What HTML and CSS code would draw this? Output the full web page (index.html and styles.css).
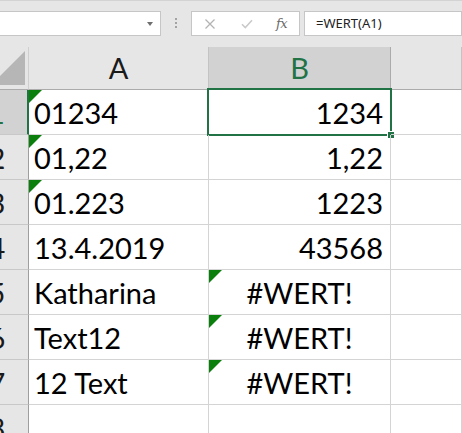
FILE: index.html
```html
<!DOCTYPE html>
<html lang="de">
<head>
<meta charset="utf-8">
<title>WERT</title>
<link rel="stylesheet" href="styles.css">
</head>
<body>
<div class="toolbar">
  <div class="namebox"><span class="arrow"></span></div>
  <div class="sep"><i></i><i></i><i></i></div>
  <div class="fbtns">
    <svg class="ic-x" width="12" height="10" viewBox="0 0 12 10"><path d="M1.5 0.5 L10.5 9.5 M10.5 0.5 L1.5 9.5" stroke="#b3b3b3" stroke-width="1.3" fill="none"/></svg>
    <svg class="ic-ok" width="12" height="10" viewBox="0 0 12 10"><path d="M1 5.2 L4.3 8.6 L11 1.2" stroke="#c9c9c9" stroke-width="1.5" fill="none"/></svg>
    <span class="fx">fx</span>
  </div>
  <div class="fbox">=WERT(A1)</div>
</div>
<div class="sheet">
  <div class="corner"><span class="tri"></span></div>
  <div class="ch">A</div>
  <div class="ch ch-sel">B</div>
  <div class="ch"></div>

  <div class="rh rh-sel">1</div>
  <div class="c txt flag">01234</div>
  <div class="c num selcell">1234<span class="sel"><span class="handle"></span></span></div>
  <div class="c"></div>

  <div class="rh">2</div>
  <div class="c txt flag">01,22</div>
  <div class="c num">1,22</div>
  <div class="c"></div>

  <div class="rh">3</div>
  <div class="c txt flag">01.223</div>
  <div class="c num">1223</div>
  <div class="c"></div>

  <div class="rh">4</div>
  <div class="c txt">13.4.2019</div>
  <div class="c num">43568</div>
  <div class="c"></div>

  <div class="rh">5</div>
  <div class="c txt">Katharina</div>
  <div class="c err flag">#WERT!</div>
  <div class="c"></div>

  <div class="rh">6</div>
  <div class="c txt">Text12</div>
  <div class="c err flag">#WERT!</div>
  <div class="c"></div>

  <div class="rh">7</div>
  <div class="c txt">12 Text</div>
  <div class="c err flag">#WERT!</div>
  <div class="c"></div>

  <div class="rh">8</div>
  <div class="c txt"></div>
  <div class="c"></div>
  <div class="c"></div>
</div>
</body>
</html>
```
FILE: styles.css
```css
* { box-sizing: border-box; }
html, body { margin: 0; padding: 0; }
body {
  width: 462px;
  height: 433px;
  overflow: hidden;
  background: #fff;
  font-family: Lato, "Open Sans", sans-serif;
}

/* formula toolbar */
.toolbar {
  height: 47px;
  background: #e6e6e6;
  border-top: 1px solid #d3d3d3;
  padding-top: 10px;
  display: flex;
  align-items: flex-start;
}
.namebox {
  width: 164px;
  margin-left: -3px;
  height: 25px;
  background: #fff;
  border: 1px solid #c6c6c6;
  display: flex;
  justify-content: flex-end;
  align-items: center;
  padding-right: 7px;
}
.arrow {
  width: 0;
  height: 0;
  border-left: 3.5px solid transparent;
  border-right: 3.5px solid transparent;
  border-top: 4px solid #6e6e6e;
}
.sep {
  width: 30px;
  height: 25px;
  display: flex;
  flex-direction: column;
  align-items: center;
  padding-top: 7px;
  gap: 2px;
}
.sep i {
  display: block;
  width: 2px;
  height: 2px;
  background: #a3a3a3;
}
.fbtns {
  width: 109px;
  height: 25px;
  background: #fff;
  border: 1px solid #c6c6c6;
  display: flex;
  align-items: center;
}
.ic-x { margin-left: 12px; }
.ic-ok { margin-left: 25px; }
.fx {
  margin-left: 23px;
  font-family: "DejaVu Serif", "Liberation Serif", serif;
  font-style: italic;
  font-size: 13px;
  color: #6a6a6a;
  letter-spacing: -0.5px;
}
.fbox {
  flex: 1;
  margin-left: 4px;
  height: 25px;
  background: #fff;
  border: 1px solid #c6c6c6;
  padding-left: 11px;
  font-family: "Noto Sans", "Open Sans", sans-serif;
  font-size: 13px;
  line-height: 22px;
  color: #222;
}

/* sheet grid */
.sheet {
  display: grid;
  grid-template-columns: 57px 180px 182px 1fr;
  grid-template-rows: 43px repeat(8, 45px);
  margin-left: -28px;
  width: 490px;
  font-size: 29px;
  line-height: 30px;
  color: #000;
}
.corner {
  position: relative;
  background: #e6e6e6;
  border-right: 1px solid #cfcfcf;
  border-bottom: 1px solid #ababab;
}
.tri {
  position: absolute;
  right: 3px;
  bottom: 4px;
  width: 0;
  height: 0;
  border-left: 34px solid transparent;
  border-bottom: 34px solid #b6b6b6;
}
.ch {
  background: #e6e6e6;
  border-right: 1px solid #c3c3c3;
  border-bottom: 1px solid #ababab;
  display: flex;
  align-items: flex-end;
  justify-content: center;
  padding-bottom: 6px;
  color: #1a1a1a;
}
.ch-sel {
  background: #d2d2d2;
  color: #217346;
  border-bottom: 2px solid #217346;
  border-right-color: #ababab;
  padding-bottom: 5px;
}
.rh {
  background: #e6e6e6;
  border-right: 1px solid #9e9e9e;
  border-bottom: 1px solid #c8c8c8;
  display: flex;
  align-items: flex-end;
  justify-content: center;
  padding-right: 6px;
  padding-bottom: 6px;
  color: #1a1a1a;
}
.rh-sel {
  background: #d2d2d2;
  color: #217346;
  border-right: 2px solid #217346;
}
.c {
  position: relative;
  border-right: 1px solid #d4d4d4;
  border-bottom: 1px solid #d4d4d4;
  display: flex;
  align-items: flex-end;
  padding-bottom: 6px;
  white-space: nowrap;
}
.txt { padding-left: 5px; }
.num { justify-content: flex-end; padding-right: 7px; }
.err { justify-content: center; }
.flag::before {
  content: "";
  position: absolute;
  top: 0;
  left: 0;
  width: 0;
  height: 0;
  border-top: 13px solid #0b7f0b;
  border-right: 13px solid transparent;
}
.sel {
  position: absolute;
  left: -2px;
  right: -2px;
  top: -2px;
  bottom: -2px;
  border: 2px solid #217346;
}
.handle {
  position: absolute;
  right: -5px;
  bottom: -5px;
  width: 8px;
  height: 8px;
  background: #217346;
  border: 1px solid #fff;
}
```
